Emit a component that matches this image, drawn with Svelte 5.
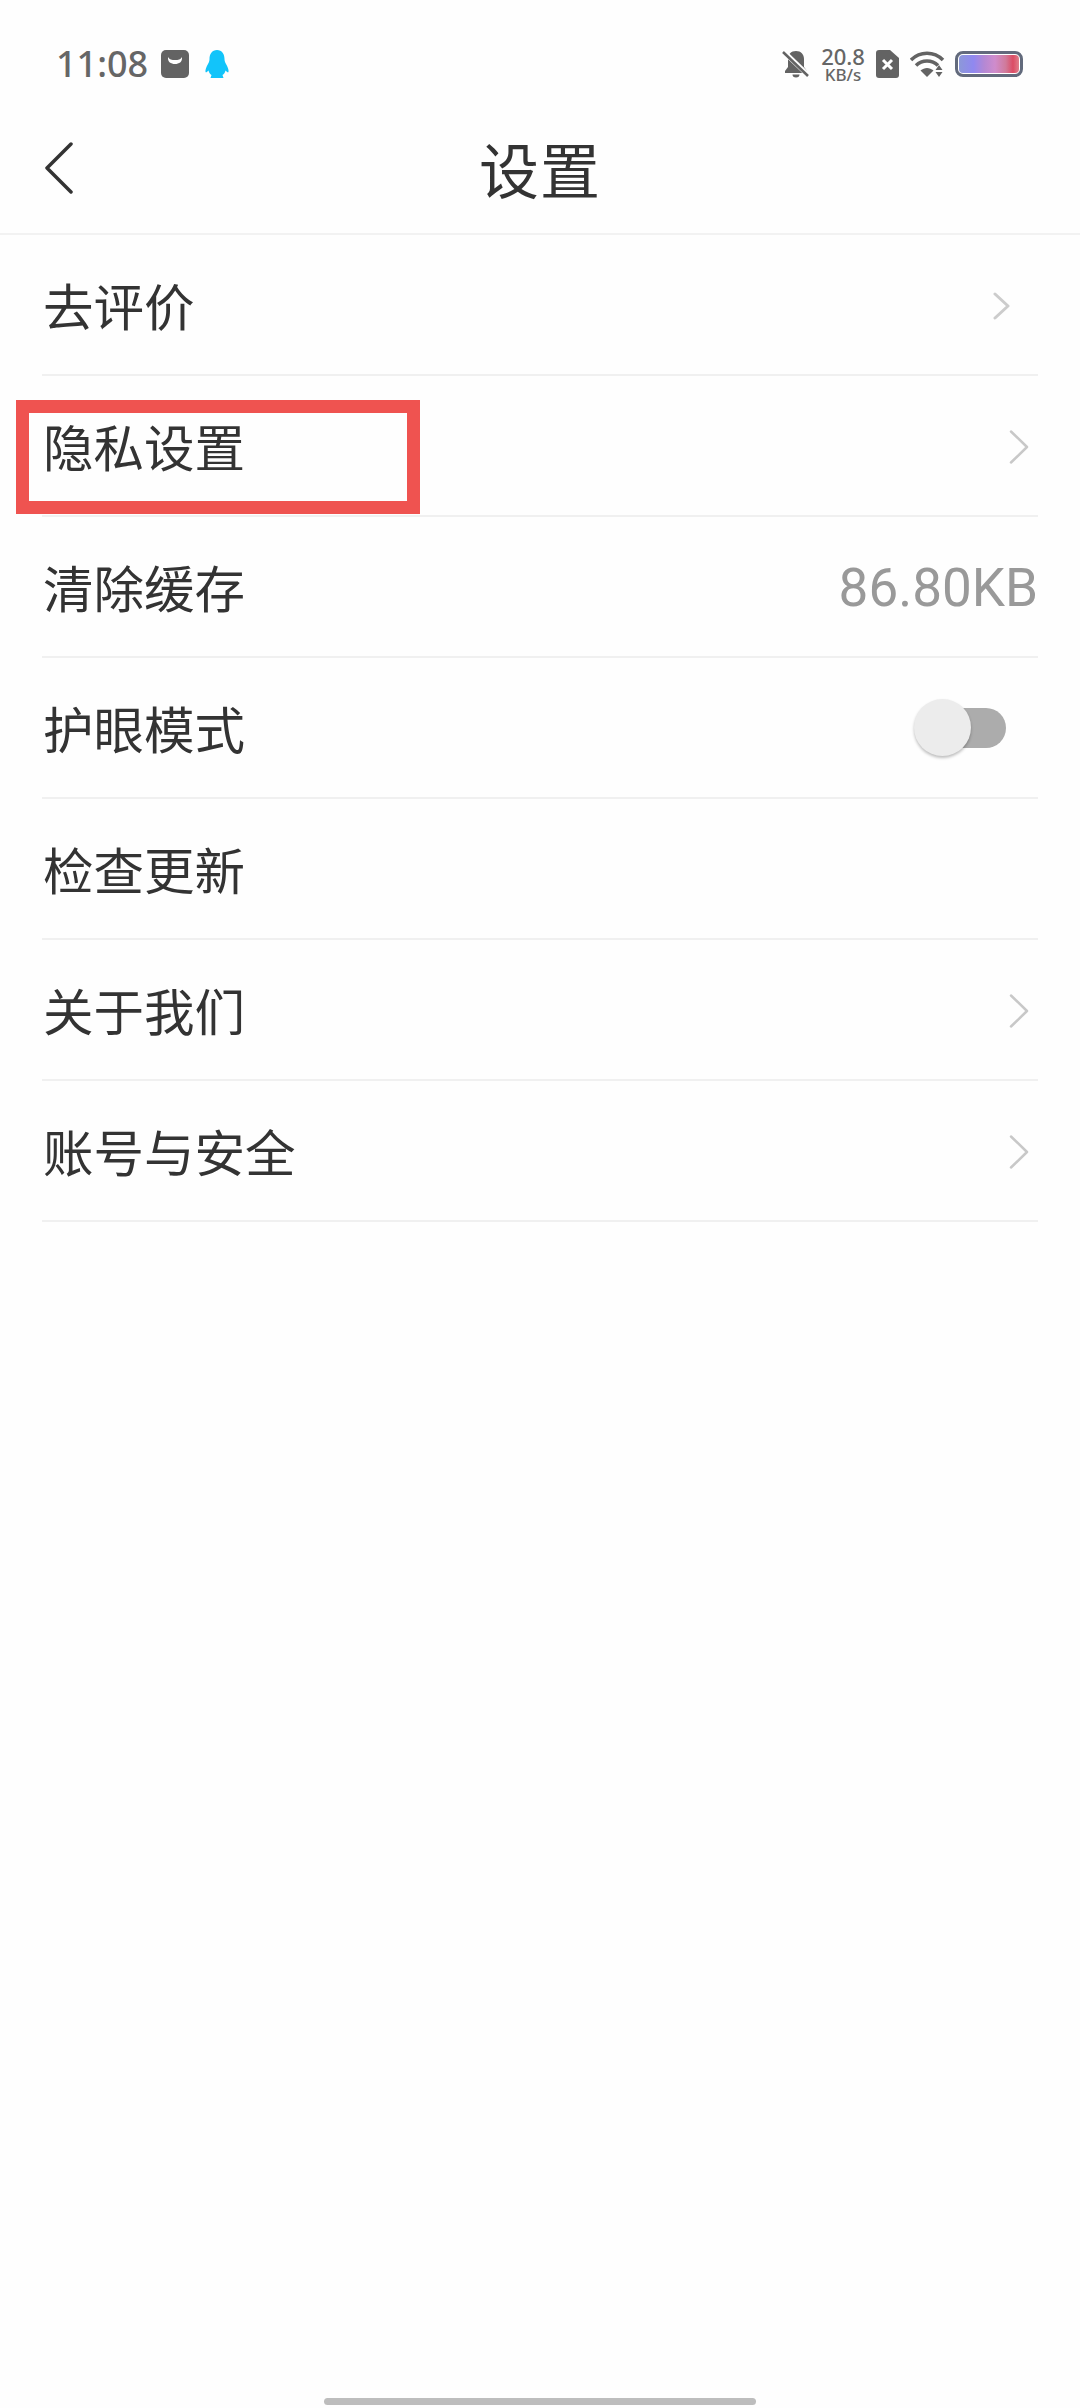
<script>
	const rows = [
		{ label: '去评价', kind: 'first' },
		{ label: '隐私设置', kind: 'arrow', marked: true },
		{ label: '清除缓存', kind: 'value', value: '86.80KB' },
		{ label: '护眼模式', kind: 'toggle' },
		{ label: '检查更新' },
		{ label: '关于我们', kind: 'arrow' },
		{ label: '账号与安全', kind: 'arrow' }
	]
</script>

<div class="page">
	<div class="status">
		<div class="status-left">
			<span class="time">11:08</span>
			<svg class="bag" width="28" height="28" viewBox="0 0 28 28">
				<rect width="28" height="28" rx="5" fill="#636363" />
				<path d="M7 7C8 9.500 11 10 14 10C17 10 20 9.500 21 7C21.500 12 18 14 14 14C10 14 6.500 12 7 7z" fill="#fff" />
			</svg>
			<svg class="qq" width="24" height="28" viewBox="0 0 24 28">
				<path d="M12 0c5 0 7.500 4 7.500 9c0 2 .5 3 1.500 5c1.500 2.500 3 6 2.500 8c-.5 1-2-.5-3-1.500c-.5 2-1.500 3.500-3 4.500l1 3H5.500l1-3c-1.500-1-2.500-2.500-3-4.500c-1 1-2.500 2.500-3 1.500c-.5-2 1-5.500 2.500-8c1-2 1.500-3 1.500-5C4.500 4 7 0 12 0z" fill="#12c4fa" />
			</svg>
		</div>
		<div class="status-right">
			<svg class="bell" width="28" height="28" viewBox="0 0 28 28">
				<path d="M14 1c5 0 8 3.500 8 8v8l3 4v2H3v-2l3-4V9c0-4.500 3-8 8-8z" fill="#636363" />
				<path d="M10.500 24.500h7a3.500 3 0 0 1-7 0z" fill="#636363" />
				<path d="M1 1l26 25" stroke="#fff" stroke-width="5" />
				<path d="M1 2l25 24" stroke="#636363" stroke-width="2.500" />
			</svg>
			<div class="speed">
				<span>20.8</span>
				<span class="unit">KB/s</span>
			</div>
			<svg class="sim" width="23" height="28" viewBox="0 0 23 28">
				<path d="M3 0h11l9 8v17a3 3 0 0 1-3 3H3a3 3 0 0 1-3-3V3a3 3 0 0 1 3-3z" fill="#636363" />
				<path d="M7 10l9 9M16 10l-9 9" stroke="#fff" stroke-width="3" />
			</svg>
			<svg class="wifi" width="35" height="28" viewBox="0 0 35 28">
				<g fill="none" stroke="#636363" stroke-width="3.500">
					<path d="M1 10c9-9 23-9 32 0" />
					<path d="M6 15.500c6-6 16-6 22 0" />
				</g>
				<path d="M10.500 20.500c4-3.500 9-3.500 13 0L17 27z" fill="#636363" />
				<path d="M29 15l3.500 5h-7zM29 27l3.500-5h-7z" fill="#636363" />
			</svg>
			<div class="battery"><div class="charge"></div></div>
		</div>
	</div>

	<header>
		<svg class="back" width="30" height="52" viewBox="0 0 30 52">
			<path d="M27 2L3 26l24 24" fill="none" stroke="#333" stroke-width="3.500" stroke-linecap="round" stroke-linejoin="round" />
		</svg>
		<h1>设置</h1>
	</header>

	<ul>
		{#each rows as row}
			<li class:marked={row.marked}>
				<span class="label">{row.label}</span>
				{#if row.kind === 'first'}
					<svg class="chevron first" width="18" height="28" viewBox="0 0 18 28">
						<path d="M2 2l13 12L2 26" fill="none" stroke="#ccc" stroke-width="3" stroke-linecap="round" stroke-linejoin="round" />
					</svg>
				{:else if row.kind === 'arrow'}
					<svg class="chevron" width="20" height="34" viewBox="0 0 20 34">
						<path d="M2 1.500L18 17L2 32.500" fill="none" stroke="#c8c8c8" stroke-width="2.500" stroke-linecap="round" stroke-linejoin="round" />
					</svg>
				{:else if row.kind === 'value'}
					<span class="value">{row.value}</span>
				{:else if row.kind === 'toggle'}
					<div class="toggle"><div class="knob"></div></div>
				{/if}
			</li>
		{/each}
	</ul>

	<div class="home"></div>
</div>

<style>
	:global(body) {
		background: #fff;
	}

	.page {
		display: flex;
		flex-direction: column;
		height: 2408px;
		font-family: 'Noto Sans CJK SC', 'Noto Sans', sans-serif;
		color: #333;
		background: #fefefe;
		box-sizing: border-box;
	}

	.status {
		display: flex;
		justify-content: space-between;
		align-items: center;
		height: 128px;
		padding: 0 57px 0 56px;
		box-sizing: border-box;
	}

	.status-left, .status-right {
		display: flex;
		align-items: center;
	}

	.time {
		font-family: 'Noto Sans', sans-serif;
		font-size: 36px;
		font-weight: 500;
		line-height: 1;
		color: #666;
		margin-right: 13px;
	}

	.qq {
		margin-left: 16px;
	}

	.speed {
		display: flex;
		flex-direction: column;
		align-items: center;
		width: 44px;
		margin: 0 11px;
		font-family: 'Noto Sans', sans-serif;
		font-size: 22px;
		font-weight: 500;
		line-height: 20px;
		color: #666;
	}

	.unit {
		font-size: 17px;
		line-height: 17px;
	}

	.wifi {
		margin: 0 10px 0 11px;
	}

	.battery {
		width: 68px;
		height: 26px;
		padding: 1px;
		box-sizing: border-box;
		border: 3px solid #626a7c;
		border-radius: 8px;
		background: #fff;
	}

	.charge {
		height: 100%;
		border-radius: 4px;
		background: linear-gradient(90deg, #8c98d8 0%, #9088f0 24%, #b488d4 42%, #cf8ccc 60%, #d07a9a 78%, #dc4c64 90%, #e0808c 100%);
	}

	header {
		position: relative;
		display: flex;
		justify-content: center;
		align-items: center;
		height: 107px;
		padding-bottom: 26px;
		box-sizing: border-box;
		border-bottom: 2px solid #f2f2f2;
	}

	.back {
		position: absolute;
		left: 44px;
		top: 14px;
	}

	h1 {
		margin: 0;
		font-size: 60px;
		font-weight: 400;
		line-height: 1;
		letter-spacing: 1px;
	}

	ul {
		margin: 0 42px;
		padding: 0;
		list-style: none;
	}

	li {
		position: relative;
		display: flex;
		justify-content: space-between;
		align-items: center;
		height: 141px;
		padding-left: 1px;
		box-sizing: border-box;
		border-bottom: 2px solid #f0f0f0;
	}

	.label {
		margin-bottom: 1px;
		font-size: 50.5px;
		line-height: 1;
	}

	.marked::before {
		content: '';
		position: absolute;
		left: -26px;
		top: 24px;
		width: 404px;
		height: 114px;
		box-sizing: border-box;
		border: 13px solid #ef5350;
	}

	.chevron {
		margin: 2px 9px 0 0;
	}

	.chevron.first {
		margin-right: 27px;
	}

	.value {
		margin-top: 3px;
		font-family: Roboto, sans-serif;
		font-size: 53px;
		line-height: 1;
		color: #999;
	}

	.toggle {
		position: relative;
		width: 78px;
		height: 40px;
		margin-right: 32px;
		border-radius: 20px;
		background: #acacac;
	}

	.knob {
		position: absolute;
		left: -14px;
		top: -9px;
		width: 57px;
		height: 57px;
		border-radius: 50%;
		background: #ececec;
		box-shadow: 0 2px 3px rgba(0, 0, 0, 0.25);
	}

	.home {
		width: 432px;
		height: 7px;
		margin: auto auto 3px;
		border-radius: 4px;
		background: #bdbdbd;
	}
</style>
